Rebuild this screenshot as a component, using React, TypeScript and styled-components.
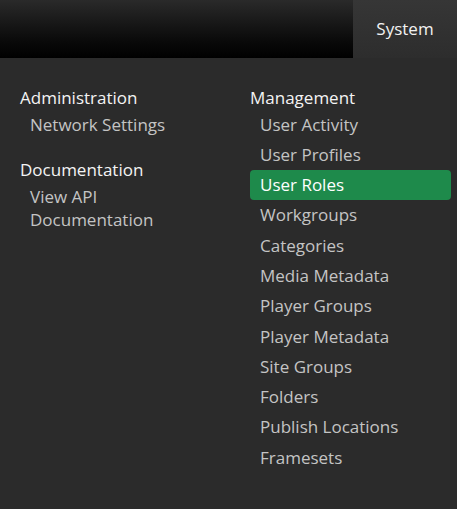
import React from 'react';
import styled, {createGlobalStyle} from 'styled-components';

type Section = {
  title: string;
  items: string[];
};

const leftSections: Section[] = [
  {title: 'Administration', items: ['Network Settings']},
  {title: 'Documentation', items: ['View API Documentation']},
];

const rightSections: Section[] = [
  {
    title: 'Management',
    items: [
      'User Activity',
      'User Profiles',
      'User Roles',
      'Workgroups',
      'Categories',
      'Media Metadata',
      'Player Groups',
      'Player Metadata',
      'Site Groups',
      'Folders',
      'Publish Locations',
      'Framesets',
    ],
  },
];

const ACTIVE = 'User Roles';

function MenuColumn({sections, narrow}: {sections: Section[]; narrow?: boolean}) {
  return (
    <Column $narrow={narrow}>
      {sections.map(section => (
        <Group key={section.title}>
          <Heading>{section.title}</Heading>
          {section.items.map(item => (
            <Item key={item} $active={item === ACTIVE}>
              {item}
            </Item>
          ))}
        </Group>
      ))}
    </Column>
  );
}

function App() {
  return (
    <>
      <GlobalStyle />
      <Page>
        <TopBar>
          <Tab>System</Tab>
        </TopBar>
        <Dropdown>
          <MenuColumn sections={leftSections} narrow />
          <MenuColumn sections={rightSections} />
        </Dropdown>
      </Page>
    </>
  );
}

const GlobalStyle = createGlobalStyle`
  html, body {
    margin: 0;
    padding: 0;
    background: #2b2b2b;
  }
  body {
    font-family: 'Open Sans', 'Noto Sans', sans-serif;
  }
`;

const Page = styled.div`
  width: 457px;
  height: 509px;
  display: flex;
  flex-direction: column;
  background: #2b2b2b;
`;

const TopBar = styled.div`
  height: 58px;
  display: flex;
  justify-content: flex-end;
  background: linear-gradient(to bottom, #2a2a2a 0%, #0a0a0a 70%, #000 100%);
`;

const Tab = styled.div`
  width: 104px;
  display: flex;
  align-items: center;
  justify-content: center;
  padding-bottom: 2px;
  color: #f2f2f2;
  font-size: 17px;
  background: linear-gradient(to bottom, #363636 0%, #2d2d2d 100%);
`;

const Dropdown = styled.div`
  flex: 1;
  display: grid;
  grid-template-columns: 230px 201px;
  padding: 28px 6px 0 20px;
`;

const Column = styled.div<{$narrow?: boolean}>`
  display: flex;
  flex-direction: column;
  gap: 19px;
  width: ${p => (p.$narrow ? '170px' : 'auto')};
`;

const Group = styled.div`
  display: flex;
  flex-direction: column;
`;

const Heading = styled.div`
  color: #f4f4f4;
  font-size: 17px;
  line-height: 23px;
`;

const Item = styled.div<{$active?: boolean}>`
  padding: 3.5px 10px;
  font-size: 17px;
  line-height: 23.3px;
  border-radius: 4px;
  color: ${p => (p.$active ? '#ffffff' : '#c4c4c4')};
  background: ${p => (p.$active ? '#1e8a4b' : 'transparent')};
`;

export default App;
